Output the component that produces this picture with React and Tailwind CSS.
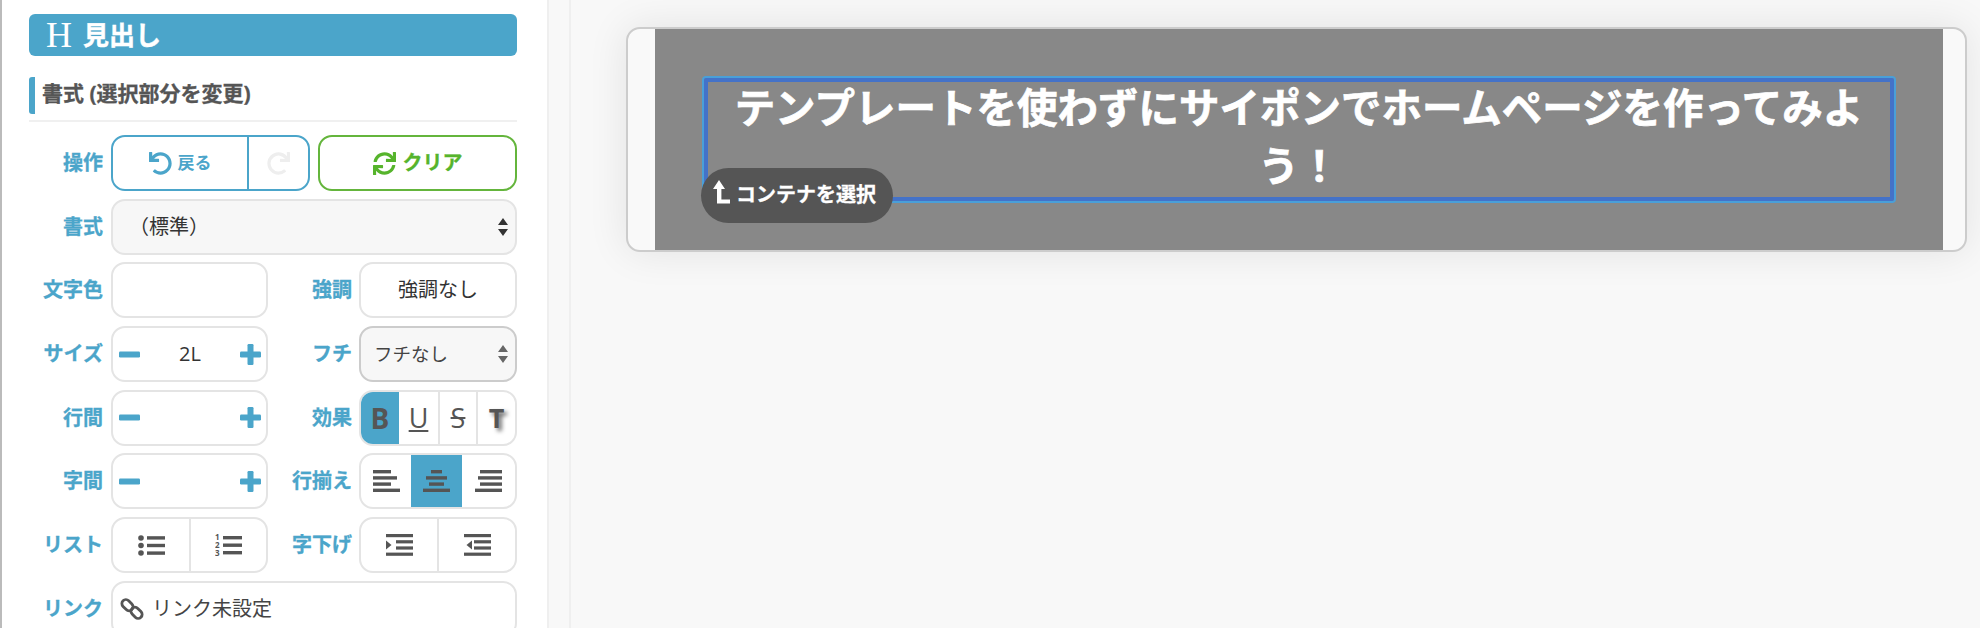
import React from "react";
import { FaUndo, FaRedo, FaSync } from "react-icons/fa";

function Label({ children, className = "w-[74px]" }) {
  return <div className={`${className} shrink-0 text-right text-[20px] font-bold text-[#4ba5ca] leading-none [-webkit-text-stroke:0.3px_#4ba5ca]`}>{children}</div>;
}

function Box({ className = "", bg = "bg-white", border = "border-[#e4e4e4]", children }) {
  return <div className={`h-14 border-2 ${border} ${bg} rounded-[14px] overflow-hidden flex items-center ${className}`}>{children}</div>;
}

function Arrows({ color = "#333" }) {
  return (
    <svg width="10" height="18" viewBox="0 0 10 18" className="shrink-0">
      <path d="M5 0 L10 7 L0 7 Z M0 11 L10 11 L5 18 Z" fill={color} />
    </svg>
  );
}

function MinusIcon() {
  return (
    <svg width="21" height="21" viewBox="0 0 21 21" fill="#4ba5ca" className="shrink-0">
      <rect x="0" y="7.5" width="21" height="6" rx="1.2" />
    </svg>
  );
}

function PlusIcon() {
  return (
    <svg width="21" height="21" viewBox="0 0 21 21" fill="#4ba5ca" className="shrink-0">
      <rect x="0" y="7.5" width="21" height="6" rx="1.2" />
      <rect x="7.5" y="0" width="6" height="21" rx="1.2" />
    </svg>
  );
}

function Stepper({ value }) {
  return (
    <Box className="w-[157px] justify-between pl-[6px] pr-[5px]">
      <MinusIcon />
      {value ? <span className="text-[20px] text-[#333]">{value}</span> : null}
      <PlusIcon />
    </Box>
  );
}

function AlignIcon({ lines }) {
  return (
    <svg width="27" height="22" viewBox="0 0 27 22">
      {lines.map((l, i) => (
        <rect key={i} x={l[0]} y={i * 6.2} width={l[1]} height="3.4" fill="#555" />
      ))}
    </svg>
  );
}

function UlIcon() {
  return (
    <svg width="27" height="21" viewBox="0 0 27 21" fill="#555">
      <circle cx="3" cy="3" r="2.8" />
      <circle cx="3" cy="10.5" r="2.8" />
      <circle cx="3" cy="18" r="2.8" />
      <rect x="9" y="1.2" width="18" height="3.4" />
      <rect x="9" y="8.8" width="18" height="3.4" />
      <rect x="9" y="16.4" width="18" height="3.4" />
    </svg>
  );
}

function OlIcon() {
  return (
    <svg width="27" height="24" viewBox="0 0 27 24" fill="#555">
      <text x="0" y="7" fontSize="8" fontWeight="700" fontFamily="Open Sans">1</text>
      <text x="0" y="15" fontSize="8" fontWeight="700" fontFamily="Open Sans">2</text>
      <text x="0" y="23" fontSize="8" fontWeight="700" fontFamily="Open Sans">3</text>
      <rect x="8" y="3" width="19" height="3.4" />
      <rect x="8" y="10.5" width="19" height="3.4" />
      <rect x="8" y="18" width="19" height="3.4" />
    </svg>
  );
}

function IndentIcon({ out }) {
  return (
    <svg width="27" height="22" viewBox="0 0 27 22" fill="#555">
      <rect x="0" y="0" width="27" height="3.2" />
      <rect x="10" y="6.2" width="17" height="3.2" />
      <rect x="10" y="12.4" width="17" height="3.2" />
      <rect x="0" y="18.6" width="27" height="3.2" />
      <path d={out ? "M8 6.5 L8 15.5 L2.5 11 Z" : "M0 6.5 L0 15.5 L5.5 11 Z"} />
    </svg>
  );
}

function ChainIcon() {
  return (
    <svg width="24" height="24" viewBox="0 0 24 24" fill="none" stroke="#555" strokeWidth="2.8">
      <rect x="1.2" y="4.2" width="12.5" height="8" rx="4" transform="rotate(45 7.5 8.2)" />
      <rect x="10.3" y="11.8" width="12.5" height="8" rx="4" transform="rotate(45 16.5 15.8)" />
    </svg>
  );
}

function UpIcon() {
  return (
    <svg width="18" height="24" viewBox="0 0 18 24" fill="white" className="shrink-0 -mt-[7px]">
      <path d="M6 0 L12 9 L8.4 9 L8.4 19.5 L17 19.5 L17 23.5 L4 23.5 L4 9 L0 9 Z" />
    </svg>
  );
}

function Row({ children }) {
  return <div className="flex items-center h-14">{children}</div>;
}

export default function App() {
  return (
    <div className="w-[1980px] h-[628px] overflow-hidden flex bg-[#f8f8f8] font-['Open_Sans','Noto_Sans_CJK_JP',sans-serif] text-[#333]">
      <div className="w-[2px] shrink-0 bg-[#bbbbbb]" />
      <aside className="w-[545px] shrink-0 bg-white pl-[27px] pr-[30px] pt-[14px] flex flex-col">
        <div className="h-[42px] shrink-0 rounded-[6px] bg-[#4ba5ca] flex items-center pl-[17px] text-white">
          <span className="font-['Liberation_Serif',serif] text-[36px] leading-none w-[37px]">H</span>
          <span className="text-[26px] font-bold leading-none [-webkit-text-stroke:0.4px_white]">見出し</span>
        </div>
        <div className="mt-[21px] h-[37px] shrink-0 flex items-center border-l-[6px] border-[#4ba5ca] rounded-[3px] pl-[7px] pb-[4px] text-[21px] font-bold text-[#555] [-webkit-text-stroke:0.3px_#555]">
          書式 (選択部分を変更)
        </div>
        <div className="mt-[6px] h-[2px] shrink-0 bg-[#f0f0f0]" />
        <div className="mt-[13px] flex flex-col gap-[7.7px]">
          <Row>
            <Label>操作</Label>
            <div className="ml-[8px] h-14 w-[199px] border-2 border-[#4ba5ca] rounded-[14px] flex">
              <div className="w-[136px] border-r-2 border-[#4ba5ca] flex items-center justify-center gap-[6px] text-[#4ba5ca] font-bold text-[17px]">
                <FaUndo className="text-[23px]" />
                <span>戻る</span>
              </div>
              <div className="flex-1 flex items-center justify-center">
                <FaRedo className="text-[23px] text-[#eeeeee]" />
              </div>
            </div>
            <div className="ml-[8px] h-14 flex-1 border-2 border-[#64b53c] rounded-[14px] flex items-center justify-center gap-[7px] text-[#56b42c] font-bold text-[20px] [-webkit-text-stroke:0.3px_#56b42c]">
              <FaSync className="text-[23px]" />
              <span>クリア</span>
            </div>
          </Row>
          <Row>
            <Label>書式</Label>
            <Box className="ml-[8px] flex-1 pl-[16px] pr-[7px] justify-between" bg="bg-[#f7f7f7]">
              <span className="text-[20px]">（標準）</span>
              <Arrows />
            </Box>
          </Row>
          <Row>
            <Label>文字色</Label>
            <Box className="ml-[8px] w-[157px]" />
            <Label className="w-[84px]">強調</Label>
            <Box className="ml-[7px] flex-1 justify-center text-[20px]">強調なし</Box>
          </Row>
          <Row>
            <Label>サイズ</Label>
            <div className="ml-[8px]"><Stepper value="2L" /></div>
            <Label className="w-[84px]">フチ</Label>
            <Box className="ml-[7px] flex-1 pl-[13px] pr-[7px] justify-between text-[18.5px] text-[#444]" bg="bg-[#f7f7f7]" border="border-[#cccccc]">
              <span>フチなし</span>
              <Arrows color="#666" />
            </Box>
          </Row>
          <Row>
            <Label>行間</Label>
            <div className="ml-[8px]"><Stepper value="" /></div>
            <Label className="w-[84px]">効果</Label>
            <Box className="ml-[7px] flex-1 items-stretch">
              <div className="w-[38px] bg-[#4ba5ca] flex items-center justify-center text-[28px] font-bold text-[#555]">B</div>
              <div className="w-[41px] border-r-2 border-[#e4e4e4] flex items-center justify-center text-[27px] text-[#555] underline underline-offset-2">U</div>
              <div className="w-[38px] border-r-2 border-[#e4e4e4] flex items-center justify-center text-[27px] text-[#555] line-through">S</div>
              <div className="flex-1 flex items-center justify-center text-[27px] font-bold text-[#555] [text-shadow:3px_3px_4px_#666]">T</div>
            </Box>
          </Row>
          <Row>
            <Label>字間</Label>
            <div className="ml-[8px]"><Stepper value="" /></div>
            <Label className="w-[84px]">行揃え</Label>
            <Box className="ml-[7px] flex-1 items-stretch">
              <div className="w-[50px] flex items-center justify-center">
                <AlignIcon lines={[[0, 18], [0, 24], [0, 18], [0, 27]]} />
              </div>
              <div className="w-[51px] bg-[#4ba5ca] flex items-center justify-center">
                <AlignIcon lines={[[8, 11], [3, 21], [6, 15], [0, 27]]} />
              </div>
              <div className="flex-1 flex items-center justify-center">
                <AlignIcon lines={[[5, 22], [3, 24], [5, 22], [0, 27]]} />
              </div>
            </Box>
          </Row>
          <Row>
            <Label>リスト</Label>
            <Box className="ml-[8px] w-[157px] items-stretch">
              <div className="w-[78px] border-r-2 border-[#e4e4e4] flex items-center justify-center">
                <UlIcon />
              </div>
              <div className="flex-1 flex items-center justify-center">
                <OlIcon />
              </div>
            </Box>
            <Label className="w-[84px]">字下げ</Label>
            <Box className="ml-[7px] flex-1 items-stretch">
              <div className="w-[78px] border-r-2 border-[#e4e4e4] flex items-center justify-center">
                <IndentIcon />
              </div>
              <div className="flex-1 flex items-center justify-center">
                <IndentIcon out />
              </div>
            </Box>
          </Row>
          <Row>
            <Label>リンク</Label>
            <Box className="ml-[8px] flex-1 pl-[7px] gap-[8px] text-[20px] text-[#444]">
              <ChainIcon />
              <span>リンク未設定</span>
            </Box>
          </Row>
        </div>
      </aside>
      <div className="w-[24px] shrink-0 bg-[#f8f8f8] border-x-2 border-[#efefef]" />
      <main className="flex-1 pl-[55px] pr-[13px] pt-[27px]">
        <div className="h-[225px] rounded-[14px] border-2 border-[#cccccc] bg-[#f9f9f9] shadow-[0_0_40px_rgba(0,0,0,0.09)] overflow-hidden pl-[27px] pr-[22px]">
          <div className="h-full bg-[#888888] px-[49px] pt-[49px]">
            <div className="relative h-[123px] border-[4px] border-[#4472c8] rounded-[2px] ring-2 ring-[#4a9fd8]">
              <div className="px-[15px] -mt-[3px] text-center text-white font-bold text-[40.5px] leading-[58px] [-webkit-text-stroke:0.7px_white]">
                テンプレートを使わずにサイポンでホームページを作ってみよう！
              </div>
              <div className="absolute left-[-7px] top-[86px] h-[55px] w-[192px] rounded-full bg-[#555555] text-white font-bold text-[20px] flex items-center pl-[12px] gap-[5px] whitespace-nowrap [-webkit-text-stroke:0.3px_white]">
                <UpIcon />
                <span className="-mt-[2px]">コンテナを選択</span>
              </div>
            </div>
          </div>
        </div>
      </main>
    </div>
  );
}
